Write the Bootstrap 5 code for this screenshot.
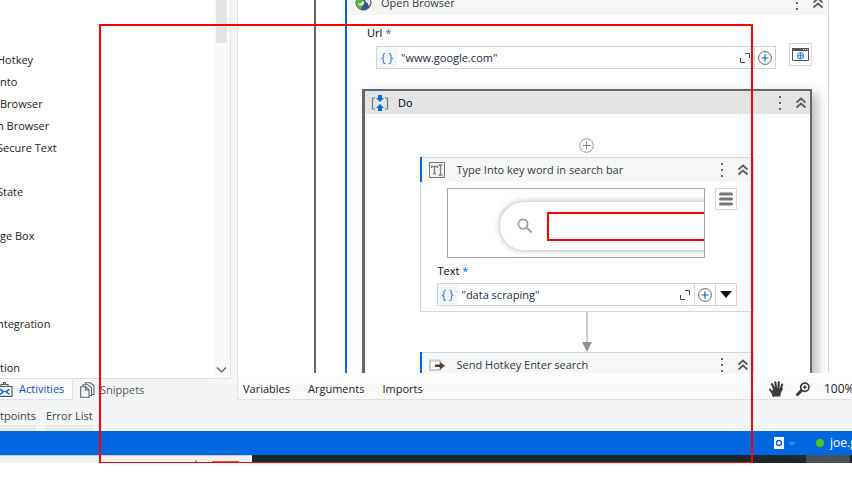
<!DOCTYPE html>
<html lang="en">
<head>
<meta charset="utf-8">
<meta name="viewport" content="width=device-width, initial-scale=1">
<title>Workflow designer</title>
<link href="https://cdn.jsdelivr.net/npm/bootstrap@5.3.0/dist/css/bootstrap.min.css" rel="stylesheet">
<style>
body{font:11px/16px "Open Sans","Noto Sans",sans-serif;color:#222;background:#fff}
button{font:inherit;color:inherit;background:none;border:0;padding:0}
svg{display:block;flex:none}
.shell{background:#f4f6f6}
.side{width:231px;margin-right:6px}
.listwrap{background:#fff;border-right:1px solid #dfe2e3;border-bottom:1px solid #dfe2e3}
.acts{padding-top:49px}
.acts li{height:22px;line-height:22px;white-space:nowrap}
.acts .cut{margin-left:-3px}
.scrollbar-v{width:17px;background:#fafafa;padding:0 3px 4px}
.thumb{height:43px;background:#e2e4e6}
.tabs{height:21px}
.tab-a{width:73px;gap:6px;background:#fafcfd;color:#0b50c0;border-right:1px solid #dfe2e3;border-bottom:1px solid #dfe2e3}
.tab-s{gap:5px;color:#555;margin-left:7px}
.designer{border-left:1px solid #dfe2e3;background:#fff}
.canvas{padding-left:76px}
.flowbox{border-left:2px solid #666;padding:0 23px 0 29px;min-height:100%}
.act-open{border-left:2px solid #0067df;border-right:1px solid #cfd6dd;margin-top:-10px;height:500px}
.head{height:25px;background:#f6f6f6;color:#2f3b45}
.head-open{padding:0 4px 0 8px;gap:9px}
.open-body{padding:10px 16px 0 15px}
.open-body>.lbl{margin-left:5px}
.lbl{color:#000;display:block}
.card-in .lbl{margin-left:1px}
.star{color:#0067df}
.url-row{margin-top:2px;gap:13px;padding-left:14px}
.url-field{margin-top:3px}
.field{border:1px solid #cbd5dc;height:23px;background:#fff}
.brace{width:20px;background:#f5f6f7;color:#1673e6;font-size:12px}
.field input{border:0;outline:0;background:none;color:#1c2b45;font:inherit;min-width:0;padding:0 4px}
.sq{width:21px;height:23px;border:1px solid #cbd5dc;border-left:0}
.ibtn{width:23px;height:23px;border:1px solid #d3d8e4}
.do-wrap{padding:0 16px 0 15px}
.do-box{margin-top:20px;border:2px solid #666;border-left-width:3px;box-shadow:6px 4px 10px rgba(0,0,0,.25);background:#fff;height:400px}
.do-head{height:23px;background:#e3e4e6;color:#000;padding:0 3px 0 6px;gap:9px}
.stack{padding:24px 2px 0 0}
.act-card{width:334px;border:1px solid #cfd6dd;background:#fff}
.act-card .head{padding:0 4px 0 8px;gap:12px;position:relative;height:24px}
.act-card .head::before{content:"";position:absolute;left:-1px;top:-1px;bottom:0;width:2px;background:#0067df}
.menus{gap:13px}
.card-in{padding:6px 16px 5px}
.shot{width:258px;height:70px;border:1px solid #a3a3a3}
.pill{margin:13px -30px 0 52px;height:48px;border-radius:24px;box-shadow:0 0 6px rgba(0,0,0,.35);padding-left:17px;gap:14px}
.target{height:29px;border:2px solid #f00}
.shot-row{gap:10px;padding-left:10px;margin-bottom:5px}
.list-btn{width:22px;height:22px}
.foot{margin-top:4px;height:23px;background:#fafafa;border-bottom:1px solid #dfe2e3;padding:2px 0 0 5px;overflow:hidden}
.foot-tabs{gap:18px}
.foot-tools{gap:12px}
.zoomtxt{font-size:12px;width:28px;margin-left:2px;white-space:nowrap}
.panes{height:31px;gap:10px;padding-top:8px;color:#444}
.panes button{border-bottom:6px solid #e9eaec;height:23px;padding-bottom:1px}
.status{height:24px;background:#0067df;color:#fff}
.dot{width:8px;height:8px;border-radius:50%;background:#52c41a;margin-left:21px}
.user{font-size:12px;width:22px;white-space:nowrap;overflow:hidden;margin-left:6px}
.taskbar{height:8px;background:#1b282c}
.search-strip{width:252px;background:#f0f0f0;border-top:1px solid #c8cacb}
.running{width:44px;background:#465459;margin-right:2px}
.margin-b{height:25px}
.marker{position:absolute;left:99px;top:24px;bottom:25px;right:99px;border:2px solid #f00;border-bottom-width:1px;pointer-events:none;z-index:5}
</style>
<script src="https://cdn.jsdelivr.net/npm/bootstrap@5.3.0/dist/js/bootstrap.bundle.min.js"></script>
</head>
<body class="vh-100 overflow-hidden position-relative d-flex flex-column">
<svg width="0" height="0" class="position-absolute" aria-hidden="true">
  <symbol id="dots" viewBox="0 0 3 14"><path d="M0 0h2v2H0zM0 6h2v2H0zM0 12h2v2H0z" fill="#666"/></symbol>
  <symbol id="up2" viewBox="0 0 12 12"><path d="M1.500 5.500 6 1.500l4.500 4M1.500 10.500 6 6.500l4.500 4" fill="none" stroke="#5c5c5c" stroke-width="1.700"/></symbol>
  <symbol id="expand" viewBox="0 0 10 10"><path d="M5 .5h4.500V5M.5 5v4.500H5" fill="none" stroke="#444"/></symbol>
  <symbol id="plus" viewBox="0 0 14 14"><circle cx="7" cy="7" r="6.400" fill="none" stroke="#666"/><path d="M7 3.500v7M3.500 7h7" stroke="#0b62c4" stroke-width="1.200"/></symbol>
</svg>

<main class="shell flex-grow-1 d-flex flex-column overflow-hidden">
  <div class="d-flex flex-grow-1 overflow-hidden">
    <aside class="side d-flex flex-column flex-shrink-0">
      <div class="listwrap flex-grow-1 d-flex overflow-hidden">
        <ul class="acts list-unstyled mb-0 flex-grow-1 overflow-hidden">
          <li class="cut">Hotkey</li><li>nto</li><li>Browser</li><li class="cut">n Browser</li><li class="cut">Secure Text</li><li></li>
          <li class="cut">State</li><li></li><li>ge Box</li><li></li><li></li><li></li><li class="cut">ntegration</li><li></li><li>tion</li>
        </ul>
        <div class="scrollbar-v d-flex flex-column justify-content-between align-items-stretch">
          <div class="thumb"></div>
          <button type="button" aria-label="Scroll down"><svg width="11" height="8" viewBox="0 0 11 8"><path d="m1 1.500 4.500 4.500L10 1.500" fill="none" stroke="#666" stroke-width="1.300"/></svg></button>
        </div>
      </div>
      <div class="tabs d-flex">
        <button type="button" class="tab-a d-flex align-items-center">
          <svg width="13" height="16" viewBox="0 0 13 16"><path d="M-3 5.500h15v9.800H-3zM1 5.500V3.500h7v2M3.500 3.500v-2h2v2" fill="#fff" stroke="#4b5964" stroke-width="1.200"/><path d="M0 8.500c2 0 2 1.500 3 2h3.500c1-.5 1-2 3-2M0 13c2 0 2-1.500 3-2M9.500 13c-2 0-2-1.500-3-2" fill="none" stroke="#0067df" stroke-width="1.500"/></svg>
          <span>Activities</span></button>
        <button type="button" class="tab-s d-flex align-items-center">
          <svg width="15" height="16" viewBox="0 0 15 16"><path d="M5.500 3V.7h5L14 4v8.500h-2" fill="#f4f6f6" stroke="#5b6770" stroke-width="1.100"/><path d="M3 5V2.700h5L11.500 6v7.500h-2" fill="#f4f6f6" stroke="#5b6770" stroke-width="1.100"/><path d="M.7 4.800h5l3.300 3v7.500H.7zM5.500 5v3H9" fill="#f4f6f6" stroke="#5b6770" stroke-width="1.100"/></svg>
          <span>Snippets</span></button>
      </div>
    </aside>

    <section class="designer d-flex flex-column flex-grow-1 overflow-hidden">
      <div class="canvas flex-grow-1 overflow-hidden">
        <div class="flowbox">
          <article class="act-open">
            <header class="head head-open d-flex align-items-center">
              <svg width="17" height="17" viewBox="0 0 17 17"><circle cx="8.500" cy="8.500" r="7.600" fill="#3a4f96" stroke="#4b5670"/><path d="M1 6c2-3 5-3 7-1 1 2-1 2 0 3s2 2 0 4-1 2-2 3.500C3 14.500 1 11 1 6z" fill="#5fb53a"/><path d="M9.500 2.500c3 0 5 2 6 5 0 2-.5 3-1.500 4.500-1-.5-.500-2-1.500-3S10 8 10 6s-1-2-.5-3.500z" fill="#dfeaf0"/><path d="M3 9.500c2 .5 4-.5 5-2.500l1.500 1c-1 3-3.500 4-6 3z" fill="#e9f3e0"/></svg>
              <span>Open Browser</span>
              <span class="menus d-flex align-items-center ms-auto">
                <button type="button" aria-label="Options"><svg width="3" height="14"><use href="#dots"/></svg></button>
                <button type="button" aria-label="Collapse"><svg width="12" height="12"><use href="#up2"/></svg></button></span>
            </header>
            <div class="open-body">
              <label class="lbl" for="url">Url <span class="star">*</span></label>
              <div class="url-row d-flex align-items-start">
                <div class="url-field d-flex flex-grow-1">
                  <div class="field d-flex align-items-center flex-grow-1 pe-1">
                    <span class="brace align-self-stretch d-flex align-items-center justify-content-center">{ }</span>
                    <input id="url" type="text" class="flex-grow-1" value="&quot;www.google.com&quot;">
                    <svg width="10" height="10"><use href="#expand"/></svg>
                  </div>
                  <button type="button" class="sq d-flex align-items-center justify-content-center" aria-label="Add"><svg width="14" height="14"><use href="#plus"/></svg></button>
                </div>
                <button type="button" class="ibtn d-flex align-items-center justify-content-center" aria-label="Open in browser"><svg width="17" height="13" viewBox="0 0 17 13"><path d="M.5.5h16v12H.5z" fill="#fff" stroke="#555"/><path d="M0 0h17v3H0z" fill="#555"/><path d="M11 1h1v1h-1zM13 1h1v1h-1zM15 1h1v1h-1z" fill="#ddd"/><circle cx="8.500" cy="7.700" r="3.200" fill="#cfe2fa" stroke="#3b87e6"/><path d="M8.500 4.500v6.400M5.300 7.700h6.400" stroke="#3b87e6"/></svg></button>
              </div>
            </div>
            <div class="do-wrap">
            <section class="do-box">
              <header class="do-head d-flex align-items-center">
                <svg width="18" height="16" viewBox="0 0 18 16"><path d="M4 3H1.500v11H4M14 3h2.500v11H14" fill="none" stroke="#777" stroke-width="1.200"/><path d="M7 0h4v3h2L9 7 5 3h2zM9 9l4 4h-2v3H7v-3H5z" fill="#0a6be0"/></svg>
                <span>Do</span>
                <span class="menus d-flex align-items-center ms-auto">
                  <button type="button" aria-label="Options"><svg width="3" height="14"><use href="#dots"/></svg></button>
                  <button type="button" aria-label="Collapse"><svg width="12" height="12"><use href="#up2"/></svg></button></span>
              </header>
              <div class="stack d-flex flex-column align-items-center">
                <svg width="15" height="15" viewBox="0 0 15 15"><circle cx="7.500" cy="7.500" r="6.800" fill="none" stroke="#999"/><path d="M7.500 3.500v8M3.500 7.500h8" stroke="#888"/></svg>
                <article class="act-card mt-1">
                  <header class="head d-flex align-items-center">
                    <svg width="16" height="16" viewBox="0 0 16 16"><path d="M.5.5h15v15H.5z" fill="#f3f3f4" stroke="#73767a"/><path d="M2.500 6V4.500h6V6M5.500 4.500v7M4 11.500h3M9.500 3h4M9.500 13h4M11.500 3v10" fill="none" stroke="#7c8085" stroke-width="1.300"/></svg>
                    <span>Type Into key word in search bar</span>
                    <span class="menus d-flex align-items-center ms-auto">
                      <button type="button" aria-label="Options"><svg width="3" height="14"><use href="#dots"/></svg></button>
                      <button type="button" aria-label="Collapse"><svg width="12" height="12"><use href="#up2"/></svg></button></span>
                  </header>
                  <div class="card-in">
                    <div class="shot-row d-flex align-items-start">
                      <div class="shot overflow-hidden"><div class="pill d-flex align-items-center">
                        <svg width="16" height="16" viewBox="0 0 16 16"><circle cx="6" cy="6" r="4.600" fill="none" stroke="#9aa0a6" stroke-width="1.800"/><path d="m9.500 9.500 5 5" stroke="#9aa0a6" stroke-width="2"/></svg>
                        <div class="target flex-grow-1"></div></div></div>
                      <button type="button" class="ibtn list-btn d-flex align-items-center justify-content-center" aria-label="Menu"><svg width="14" height="14" viewBox="0 0 14 14"><path d="M1.500 2h11M1.500 7h11M1.500 12h11" stroke="#777" stroke-width="3" stroke-linecap="round"/></svg></button>
                    </div>
                    <label class="lbl" for="txt">Text <span class="star">*</span></label>
                    <div class="d-flex mt-1">
                      <div class="field d-flex align-items-center flex-grow-1 pe-1">
                        <span class="brace align-self-stretch d-flex align-items-center justify-content-center">{ }</span>
                        <input id="txt" type="text" class="flex-grow-1" value="&quot;data scraping&quot;">
                        <svg width="10" height="10"><use href="#expand"/></svg>
                      </div>
                      <button type="button" class="sq d-flex align-items-center justify-content-center" aria-label="Add"><svg width="14" height="14"><use href="#plus"/></svg></button>
                      <button type="button" class="sq d-flex align-items-center justify-content-center" aria-label="More"><svg width="12" height="7" viewBox="0 0 12 7"><path d="M0 0h12L6 7z" fill="#111"/></svg></button>
                    </div>
                  </div>
                </article>
                <svg width="10" height="40" viewBox="0 0 10 40"><path d="M5 0v32" stroke="#999"/><path d="M0 30h10L5 40z" fill="#929292"/></svg>
                <article class="act-card">
                  <header class="head d-flex align-items-center">
                    <svg width="16" height="13" viewBox="0 0 16 13"><path d="M1 1.500h10v9.500H1z" fill="#fff" stroke="#c9c9c9" stroke-width="2"/><path d="M6 5.500h5V3l5 3.700-5 3.700V8H6z" fill="#4b4436"/></svg>
                    <span>Send Hotkey Enter search</span>
                    <span class="menus d-flex align-items-center ms-auto">
                      <button type="button" aria-label="Options"><svg width="3" height="14"><use href="#dots"/></svg></button>
                      <button type="button" aria-label="Collapse"><svg width="12" height="12"><use href="#up2"/></svg></button></span>
                  </header>
                </article>
              </div>
            </section>
            </div>
          </article>
        </div>
      </div>
      <nav class="foot d-flex align-items-center justify-content-between flex-shrink-0">
        <div class="foot-tabs d-flex"><button type="button">Variables</button><button type="button">Arguments</button><button type="button">Imports</button></div>
        <div class="foot-tools d-flex align-items-center">
          <button type="button" aria-label="Pan"><svg width="15" height="16" viewBox="0 0 15 16"><path d="M4.500 15 3.500 12 1 8.500M6 9.500 3 3.200M7.300 9 6.300 1.200M9.300 9l.5-7.600M11 9.500l2.200-6" fill="none" stroke="#3a3a3a" stroke-width="2.100" stroke-linecap="round"/><path d="M4 8h7.500l1-1.500c1 0 1.500.6 1.300 1.500L11.500 13v2.500H4.800L3 11z" fill="#3a3a3a"/></svg></button>
          <button type="button" aria-label="Zoom"><svg width="14" height="14" viewBox="0 0 14 14"><circle cx="8.800" cy="5.200" r="4.100" fill="#fff" stroke="#3a3a3a" stroke-width="1.700"/><path d="M8.800 3.200v4M6.800 5.200h4" stroke="#3a3a3a" stroke-width="1.300"/><path d="m5.500 8.500-4 4" stroke="#3a3a3a" stroke-width="3" stroke-linecap="round"/></svg></button>
          <span class="zoomtxt">100%</span>
        </div>
      </nav>
    </section>
  </div>
  <div class="panes d-flex flex-shrink-0"><button type="button">tpoints</button><button type="button">Error List</button></div>
</main>

<footer class="status d-flex align-items-center justify-content-end flex-shrink-0">
  <button type="button" class="d-flex align-items-center" aria-label="Source"><svg width="21" height="12" viewBox="0 0 21 12"><path d="M0 0h10v12H0z" fill="#fff"/><circle cx="5" cy="6" r="2.500" fill="none" stroke="#0067df" stroke-width="1.400"/><path d="m15.500 5 2.500 2.500L20.500 5" fill="none" stroke="#a9cdf7"/></svg></button>
  <span class="dot"></span>
  <span class="user">joe.g</span>
</footer>
<div class="taskbar d-flex flex-shrink-0">
  <div class="search-strip"><svg width="251" height="7" viewBox="0 0 251 7"><path d="m194 7 2-3 2 3z" fill="#4a9a70"/><path d="M212 5h27v2h-27z" fill="#d9582f"/></svg></div>
  <div class="running ms-auto"></div>
</div>
<div class="margin-b flex-shrink-0"></div>
<div class="marker"></div>
</body>
</html>
